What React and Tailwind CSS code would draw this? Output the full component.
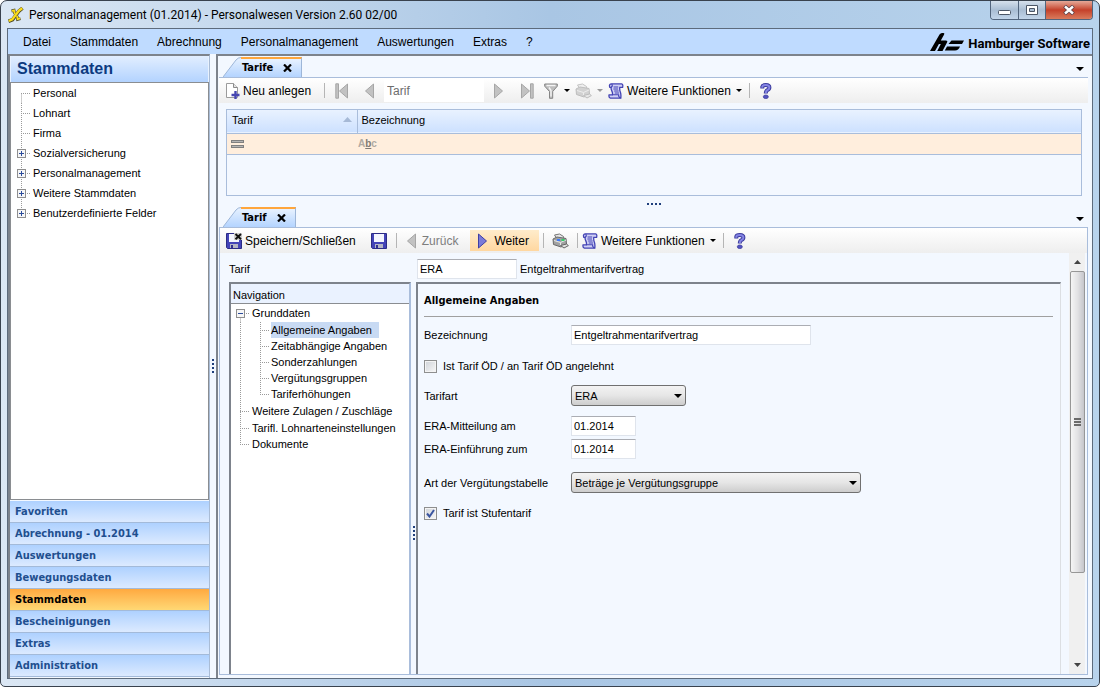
import { useState } from 'react';

const menuItems = ['Datei', 'Stammdaten', 'Abrechnung', 'Personalmanagement', 'Auswertungen', 'Extras', '?'];

const sidebarTree = [
  { label: 'Personal' },
  { label: 'Lohnart' },
  { label: 'Firma' },
  { label: 'Sozialversicherung', box: true },
  { label: 'Personalmanagement', box: true },
  { label: 'Weitere Stammdaten', box: true },
  { label: 'Benutzerdefinierte Felder', box: true },
];

const sidebarGroups = [
  'Favoriten', 'Abrechnung - 01.2014', 'Auswertungen', 'Bewegungsdaten',
  'Stammdaten', 'Bescheinigungen', 'Extras', 'Administration',
];

const navChildren = [
  'Allgemeine Angaben', 'Zeitabhängige Angaben', 'Sonderzahlungen',
  'Vergütungsgruppen', 'Tariferhöhungen',
];

const navRest = ['Weitere Zulagen / Zuschläge', 'Tarifl. Lohnarteneinstellungen', 'Dokumente'];

/* ---------- icons ---------- */

function AppIcon() {
  return (
    <svg width="16" height="16" viewBox="0 0 16 16" aria-hidden="true">
      <path d="M.5 14.2 L4.5 12.8 L11 4 L14.5 1.2" fill="none" stroke="#4d4a2c" strokeWidth="3.6" />
      <path d="M3.5 4 L6 3.4 L6.8 7 M9 9 L9.6 12.4 L12.5 11.6" fill="none" stroke="#4d4a2c" strokeWidth="3" />
      <path d="M.8 14 L4.3 12.4 L11 3.6 L14.3 1.2" fill="none" stroke="#fbdc1c" strokeWidth="2.4" />
      <path d="M3.8 4 L6 3.4 L6.8 7 M9 9 L9.6 12.2 L12.2 11.4" fill="none" stroke="#fbdc1c" strokeWidth="1.8" />
    </svg>
  );
}

function CompanyMark() {
  return (
    <svg width="34" height="18" viewBox="0 0 34 18" aria-hidden="true">
      <path d="M0 18 L9.5 1.5 Q10.5 0 12 0 H13.5 Q15 0 14 1.8 L10.8 7.5 H15.8 Q18 7.5 17 9.5 L12.5 18 H7.2 L10.8 11 H8.9 L5 18 Z" />
      <path d="M21.5 7.5 H34 L32 11 H18.5 Z M17 13.5 H30 Q28.5 17.5 25 17.5 H14.8 Z" />
    </svg>
  );
}

function Caret({ small = false, className = 'fill-black' }) {
  return small ? (
    <svg width="6" height="3" viewBox="0 0 6 3" className={`shrink-0 ${className}`} aria-hidden="true">
      <path d="M0 0 H6 L3 3 Z" />
    </svg>
  ) : (
    <svg width="8" height="4" viewBox="0 0 8 4" className={`shrink-0 ${className}`} aria-hidden="true">
      <path d="M0 0 H8 L4 4 Z" />
    </svg>
  );
}

function NewDocIcon() {
  return (
    <svg width="15" height="16" viewBox="0 0 15 16" aria-hidden="true">
      <path d="M.5 .5 H7.5 L11.5 4.5 V14.5 H.5 Z" fill="#fff" stroke="#9b9b9b" />
      <path d="M7.5 .5 V4.5 H11.5" fill="#e4e4e4" stroke="#8b8b8b" />
      <path d="M9.5 8 V16 M5.5 12 H13.5" stroke="#4646b0" strokeWidth="2.4" />
    </svg>
  );
}

function Arrow({ dir = 'right', bar = false, active = false }) {
  const fill = active ? '#7a7ad8' : '#c2c2c2';
  const stroke = active ? '#3f3fa4' : '#a6a6a6';
  const w = bar ? 13 : 10;
  return (
    <svg width={w} height="16" viewBox={`0 0 ${w} 16`} aria-hidden="true">
      <g transform={dir === 'left' ? `translate(${w} 0) scale(-1 1)` : undefined} fill={fill} stroke={stroke}>
        <path d="M.5 1 V15 L8.5 8 Z" />
        {bar && <path d="M9.5 .8 H12.2 V15.2 H9.5 Z" />}
      </g>
    </svg>
  );
}

function FunnelIcon() {
  return (
    <svg width="14" height="16" viewBox="0 0 14 16" aria-hidden="true">
      <path d="M.7 1 H13.3 V3.2 L8.7 8.5 V15.3 H5.5 V8.5 L.7 3.2 Z" fill="#bdbdbd" stroke="#858585" />
      <path d="M2.5 2.5 H11.5 M5 4.5 L7 7.5 V13.5" stroke="#f4f4f4" strokeWidth="1.4" fill="none" />
    </svg>
  );
}

function PrinterIcon({ disabled = false }) {
  return (
    <svg width="17" height="16" viewBox="0 0 17 16" aria-hidden="true" opacity={disabled ? 0.6 : 1}>
      <path d="M2.5 2 L7.5 1 L11.5 3.5 L12 7 L5 6 Z" fill="#e8e8e8" stroke={disabled ? '#a0a0a0' : '#777'} />
      <path d="M1 6 L5 4 L14 5.5 L14.5 11 L9 14 L1.5 11.5 Z" fill={disabled ? '#bbb' : '#a2a2a2'} stroke={disabled ? '#999' : '#6a6a6a'} />
      <path d="M2 7.5 L8.5 9.5 V13 M8.5 9.5 L14 7" stroke="#e8e8e8" fill="none" />
      <path d="M8.5 12.5 L14.5 11 L16.4 12.6 L12 15 Z" fill="#e0e0e0" stroke={disabled ? '#999' : '#666'} />
      {!disabled && <rect x="5" y="6" width="3" height="2" fill="#3d7bff" />}
      {!disabled && <rect x="9.5" y="6" width="3" height="2" fill="#35d06a" />}
    </svg>
  );
}

function ScrollIcon() {
  return (
    <svg width="16" height="16" viewBox="0 0 16 16" aria-hidden="true">
      <path d="M4 2 H12 L11.6 5 L12.6 11 V14 H4 L4.6 11 L3 5 Z" fill="#e9e9fc" />
      <path d="M3.2 .9 H13.6 Q15.3 1.2 14.6 4.3 H11.8 Q11.4 7 12.4 9.2 Q13.2 11.5 12.8 15.1 H2.4 Q.4 14.4 1.1 11.8 H4.4 Q4.9 10 3.7 7.6 Q2.8 6 3.2 4.3 H1.8 Q.7 1.6 3.2 .9 Z" fill="#cfcff5" stroke="#4343b4" strokeWidth="1.3" />
      <path d="M3.2 4.3 Q5 3.4 3.8 1 M4.4 11.8 H10.6 Q10.2 14 12.8 15" fill="none" stroke="#4343b4" strokeWidth="1.1" />
      <path d="M5.6 4 H10.2 M5.4 6 H10 M6.2 8 H10.6 M6.8 10 H11" stroke="#4343b4" />
    </svg>
  );
}

function HelpIcon() {
  return (
    <svg width="12" height="16" viewBox="0 0 12 16" aria-hidden="true">
      <path d="M2.3 5.4 V3.6 Q2.6 2 5.8 2 Q9.4 2 9.4 4.6 Q9.4 6.2 7.6 7 Q5.8 7.8 5.8 10.6" fill="none" stroke="#3c3c9e" strokeWidth="4" />
      <path d="M2.3 4.8 V3.6 Q2.6 2 5.8 2 Q9.4 2 9.4 4.6 Q9.4 6.2 7.6 7 Q5.8 7.8 5.8 10" fill="none" stroke="#8484e4" strokeWidth="2" />
      <ellipse cx="5.8" cy="13.8" rx="2.5" ry="1.8" fill="#5252c0" stroke="#3c3c9e" strokeWidth=".8" />
    </svg>
  );
}

function DiskIcon({ close = false }) {
  return (
    <svg width="16" height="16" viewBox="0 0 16 16" aria-hidden="true">
      <path d="M.5 .5 H15.5 V15.5 H1.5 L.5 14.5 Z" fill="#4444b8" stroke="#2c2c86" />
      <rect x="3" y="1" width="10" height="8" fill="#f4f6ff" />
      <rect x="4" y="11" width="8" height="4" fill="#b4b5c4" />
      <rect x="5" y="12" width="2" height="3" fill="#2f2f92" />
      {close && (
        <g>
          <rect x="8" y="0" width="8" height="7" fill="#cfcfcf" />
          <path d="M9.5 1 L15 6.2 M15 1 L9.5 6.2" stroke="#111" strokeWidth="1.9" />
        </g>
      )}
    </svg>
  );
}

function TabClose() {
  return (
    <svg width="9" height="8" viewBox="0 0 9 8" aria-hidden="true">
      <path d="M1 .5 L8 7.5 M8 .5 L1 7.5" stroke="#000" strokeWidth="2.2" />
    </svg>
  );
}

/* Dotted connector in front of a tree row */
function TreeLine({ h, w, x, first = false, last = false, box, horizontal = true }) {
  const mid = Math.floor(h / 2) + 0.5;
  return (
    <svg width={w} height={h} viewBox={`0 0 ${w} ${h}`} className="shrink-0" aria-hidden="true">
      <g stroke="#9a9a9a" strokeDasharray="1 1" fill="none">
        <path d={`M${x + 0.5} ${first ? mid : 0} V${last ? mid : h}`} />
        {horizontal && <path d={`M${x} ${mid} H${w - 2}`} />}
      </g>
      {box && (
        <g>
          <rect x={x - 3.5} y={mid - 4} width="8" height="8" fill="#f6f6f6" stroke="#8f8f8f" />
          <path d={`M${x - 2} ${mid} H${x + 3}`} stroke="#2b4c9b" />
          {box === 'plus' && <path d={`M${x + 0.5} ${mid - 2.5} V${mid + 2.5}`} stroke="#2b4c9b" />}
        </g>
      )}
    </svg>
  );
}

/* ---------- small parts ---------- */

function Tab({ label }) {
  return (
    <div className="flex h-[20px]">
      <svg width="18" height="20" viewBox="0 0 18 20" aria-hidden="true">
        <defs>
          <linearGradient id="tabFill" x1="0" y1="0" x2="0" y2="1">
            <stop offset="0" stopColor="#e8f2ff" />
            <stop offset="1" stopColor="#b4d4ff" />
          </linearGradient>
        </defs>
        <path d="M0 20 L13 3 Q15 .5 18 .5 V20 Z" fill="url(#tabFill)" />
        <path d="M0 20 L13 3 Q15 .5 18 .5" fill="none" stroke="#9db6d8" />
      </svg>
      <div className="flex items-center gap-[10px] border-t-2 border-r border-t-[#ffa63c] border-r-[#9db6d8] bg-linear-to-b from-[#e8f2ff] to-[#b4d4ff] pr-[9px] pl-px">
        <button type="button" className="font-['DejaVu_Sans_Condensed','DejaVu_Sans',sans-serif] text-[11px] font-bold">{label}</button>
        <button type="button" aria-label={`${label} schließen`}><TabClose /></button>
      </div>
    </div>
  );
}

function TabStrip({ label }) {
  return (
    <div className="flex h-[21px] shrink-0 items-end justify-between pr-[4px] pl-[4px]">
      <Tab label={label} />
      <button type="button" aria-label="Fenster" className="pb-[6px]"><Caret /></button>
    </div>
  );
}

function Separator() {
  return <span className="h-[15px] w-px bg-[#b5b5b5]" />;
}

function Dots({ vertical = false }) {
  return (
    <span className={`flex gap-[2px] ${vertical ? 'flex-col' : ''}`}>
      {[0, 1, 2, 3].map((i) => <i key={i} className="size-[2px] bg-[#1f3f7c]" />)}
    </span>
  );
}

function Select({ id, value, className }) {
  return (
    <span className={`relative inline-flex ${className}`}>
      <select id={id} defaultValue={value} className="h-[21px] w-full appearance-none rounded-[3px] border border-[#707070] bg-linear-to-b from-[#f3f3f3] via-[#e6e6e6] to-[#cdcdcd] px-[3px] text-[11px]">
        <option>{value}</option>
      </select>
      <svg width="8" height="4" viewBox="0 0 8 4" className="pointer-events-none absolute top-[9px] right-1" aria-hidden="true">
        <path d="M0 0 H8 L4 4 Z" />
      </svg>
    </span>
  );
}

function Checkbox({ id, label, checked, onChange }) {
  return (
    <div className="flex items-center">
      <span className="relative flex">
        <input id={id} type="checkbox" checked={checked} onChange={onChange} className="size-[13px] appearance-none border border-[#8e8f8f] bg-linear-to-br from-[#cfd3d8] to-[#f8f8f8] shadow-[inset_0_0_0_1px_#f4f4f4]" />
        {checked && (
          <svg width="9" height="9" viewBox="0 0 9 9" className="pointer-events-none absolute top-[2px] left-[2px]" aria-hidden="true">
            <path d="M1 4.5 L3.5 7.5 L8 1" fill="none" stroke="#3a55a0" strokeWidth="2" />
          </svg>
        )}
      </span>
      <label htmlFor={id} className="pl-[6px]">{label}</label>
    </div>
  );
}

const inputClass = 'h-[20px] border border-[#dfe4ec] border-t-[#abadb3] bg-white px-[2px] pb-px text-[11px] outline-none';

/* ---------- page sections ---------- */

function TitleBar() {
  return (
    <header className="flex h-[27px] shrink-0 items-start justify-between">
      <div className="flex items-center gap-[5px] pt-[6px] pl-px">
        <AppIcon />
        <h1 className="font-['Roboto',sans-serif] text-[12px] leading-4 whitespace-nowrap">
          Personalmanagement (01.2014) - Personalwesen Version 2.60 02/00
        </h1>
      </div>
      <div className="flex h-[19px] overflow-hidden rounded-b-[4px] border border-t-0 border-[#52657d]">
        <button type="button" aria-label="Minimieren" className="flex w-[28px] items-center justify-center border-r border-[#52657d] bg-linear-to-b from-[#d5e0ec] via-[#a9bdd3] to-[#c2d5ea]">
          <svg width="13" height="12" viewBox="0 0 13 12"><rect x=".5" y="6.5" width="12" height="4" rx="1" fill="#fff" stroke="#4c5666" /></svg>
        </button>
        <button type="button" aria-label="Maximieren" className="flex w-[27px] items-center justify-center border-r border-[#52657d] bg-linear-to-b from-[#d5e0ec] via-[#a9bdd3] to-[#c2d5ea]">
          <svg width="12" height="10" viewBox="0 0 12 10"><path fillRule="evenodd" d="M.5 .5 H11.5 V9.5 H.5 Z M3.5 3.5 V6.5 H8.5 V3.5 Z" fill="#fff" stroke="#4c5666" /></svg>
        </button>
        <button type="button" aria-label="Schließen" className="flex w-[46px] items-center justify-center bg-linear-to-b from-[#e5a898] via-[#c4402a] to-[#d97a5c]">
          <svg width="12" height="10" viewBox="0 0 12 10">
            <path d="M1.5 1 L10.5 9 M10.5 1 L1.5 9" stroke="#5b4048" strokeWidth="4" />
            <path d="M2 1.5 L10 8.5 M10 1.5 L2 8.5" stroke="#fff" strokeWidth="2.4" />
          </svg>
        </button>
      </div>
    </header>
  );
}

function MenuBar() {
  return (
    <nav className="flex h-[25px] shrink-0 items-center justify-between bg-[#bfdbff] pr-[2px] pl-[15px]">
      <ul className="flex gap-[19px] text-[12px]">
        {menuItems.map((item) => <li key={item}><button type="button">{item}</button></li>)}
      </ul>
      <div className="flex items-end gap-[4px]">
        <CompanyMark />
        <span className="font-['Roboto',sans-serif] text-[13px] leading-[14px] font-bold">Hamburger Software</span>
      </div>
    </nav>
  );
}

function Sidebar({ active, onSelect }) {
  return (
    <aside className="flex w-[202px] shrink-0 flex-col border-t-2 border-r border-l-2 border-[#7d838c] border-r-[#a9bcd6] pb-px">
      <h2 className="flex h-[26px] shrink-0 items-center border-x border-[#e8f2ff] bg-linear-to-b from-[#e2eeff] to-[#b3d3ff] pl-[6px] text-[16px] font-bold text-[#0c3a80]">
        Stammdaten
      </h2>
      <ul className="flex-1 border border-[#8a8d91] bg-white">
        {sidebarTree.map((node, i) => (
          <li key={node.label} className="flex h-[20px] items-center">
            <TreeLine h={20} w={22} x={10} first={i === 0} last={i === sidebarTree.length - 1} box={node.box && 'plus'} />
            <button type="button">{node.label}</button>
          </li>
        ))}
      </ul>
      <div className="mt-px font-['DejaVu_Sans_Condensed','DejaVu_Sans',sans-serif] text-[11px] font-bold">
        {sidebarGroups.map((group) => (
          <button
            key={group}
            type="button"
            onClick={() => onSelect(group)}
            className={`block h-[22px] w-full border-b border-[#a3bad9] bg-linear-to-b pl-[5px] text-left ${
              group === active ? 'from-[#ffa93f] to-[#ffd874] text-black' : 'from-[#aed1ff] to-[#dceaff] text-[#1f4f8f]'
            }`}
          >
            {group}
          </button>
        ))}
      </div>
    </aside>
  );
}

function ListPanel() {
  return (
    <section className="shrink-0">
      <TabStrip label="Tarife" />
      <div className="flex h-[26px] items-center border-t border-[#a9bddb] bg-linear-to-b from-white to-[#eeeeee] pl-[7px] text-[12px]">
        <button type="button" className="flex items-center gap-[2px]"><NewDocIcon />Neu anlegen</button>
        <div className="flex items-center gap-[10px] pl-[13px]">
          <Separator />
          <button type="button" aria-label="Erster"><Arrow dir="left" bar /></button>
          <button type="button" aria-label="Zurück" className="pl-[6px]"><Arrow dir="left" /></button>
          <input aria-label="Suche" defaultValue="Tarif" className="h-[23px] w-[100px] bg-white px-[3px] text-[12px] text-[#6d6d6d] outline-none" />
          <button type="button" aria-label="Vor"><Arrow /></button>
          <button type="button" aria-label="Letzter" className="pl-[7px]"><Arrow bar /></button>
        </div>
        <button type="button" aria-label="Filter" className="flex items-center gap-[6px] pl-[10px]"><FunnelIcon /><Caret small /></button>
        <button type="button" aria-label="Drucken" className="flex items-center gap-[5px] pl-[5px]"><PrinterIcon disabled /><Caret small className="fill-[#9a9a9a]" /></button>
        <button type="button" className="flex items-center gap-[3px] pr-[7px] pl-[5px]"><ScrollIcon />Weitere Funktionen<span className="pl-[2px]"><Caret small /></span></button>
        <Separator />
        <button type="button" aria-label="Hilfe" className="pl-[10px]"><HelpIcon /></button>
      </div>
      <div className="mt-[6px] mr-[6px] ml-[7px] h-[87px] border border-[#a9bddb]">
        <table className="w-full table-fixed border-collapse text-left text-[11px]">
          <thead>
            <tr className="h-[23px] border-b border-[#a9bddb] bg-linear-to-b from-[#e9f2ff] to-[#cde1ff]">
              <th className="w-[130px] border-r border-[#a9bddb] px-[5px] pb-[3px] font-normal">
                <span className="flex items-center justify-between">
                  Tarif
                  <svg width="9" height="5" viewBox="0 0 9 5" aria-hidden="true"><path d="M0 5 L4.5 0 L9 5 Z" fill="#a6b9d6" /></svg>
                </span>
              </th>
              <th className="px-[4px] pb-[3px] font-normal">Bezeichnung</th>
            </tr>
          </thead>
          <tbody>
            <tr className="h-[21px] border-b border-[#a9bddb] bg-[#ffeedd]">
              <td className="px-[4px]">
                <svg width="13" height="8" viewBox="0 0 13 8" aria-hidden="true">
                  <rect x=".5" y=".5" width="12" height="2" fill="#b5b5b5" stroke="#808080" />
                  <rect x=".5" y="5.5" width="12" height="2" fill="#b5b5b5" stroke="#808080" />
                </svg>
              </td>
              <td className="px-px text-[10px] font-bold text-[#b0aaa2]">A<span className="text-[#807a74] underline">b</span>c</td>
            </tr>
          </tbody>
        </table>
      </div>
    </section>
  );
}

function NavigationTree({ active, onSelect }) {
  return (
    <div className="flex w-[182px] shrink-0 flex-col border-2 border-b-0 border-[#7d838c] border-r-[#a9bddb] bg-white">
      <h3 className="h-[20px] shrink-0 border-b border-[#8a8d91] bg-[#eaf2ff] pl-[2px] leading-[22px]">Navigation</h3>
      <ul>
        <li>
          <div className="flex h-[18px] items-center">
            <TreeLine h={18} w={21} x={9} first box="minus" />
            <button type="button">Grunddaten</button>
          </div>
          <ul>
            {navChildren.map((item, i) => (
              <li key={item} className="flex h-[16px] items-center">
                <TreeLine h={16} w={21} x={9} horizontal={false} />
                <TreeLine h={16} w={19} x={8} last={i === navChildren.length - 1} />
                <button
                  type="button"
                  onClick={() => onSelect(item)}
                  className={`h-[16px] leading-[16px] whitespace-nowrap ${item === active ? 'bg-[#c8daf3] pr-[7px]' : ''}`}
                >
                  {item}
                </button>
              </li>
            ))}
          </ul>
        </li>
        {navRest.map((item, i) => (
          <li key={item} className={`flex items-center ${i === 0 ? 'h-[18px]' : 'h-[16px]'}`}>
            <TreeLine h={i === 0 ? 18 : 16} w={21} x={9} last={i === navRest.length - 1} />
            <button type="button" className="whitespace-nowrap">{item}</button>
          </li>
        ))}
      </ul>
    </div>
  );
}

function TarifForm() {
  const [oed, setOed] = useState(false);
  const [stufen, setStufen] = useState(true);

  return (
    <form className="min-w-0 flex-1 border-t-2 border-r border-l-2 border-[#7d838c] border-r-[#dcdfe3] pr-[7px] pl-[6px]">
      <h3 className="border-b border-[#a0a0a0] pt-[8px] pb-[7px] font-['DejaVu_Sans_Condensed','DejaVu_Sans',sans-serif] text-[11px] leading-[17px] font-bold">
        Allgemeine Angaben
      </h3>
      <div className="grid grid-cols-[147px_1fr] items-center pt-[8px]">
        <label htmlFor="bezeichnung">Bezeichnung</label>
        <input id="bezeichnung" defaultValue="Entgeltrahmentarifvertrag" className={`${inputClass} w-[240px]`} />
        <div className="col-span-2 pt-[13px] pb-[11px]">
          <Checkbox id="oed" label="Ist Tarif ÖD / an Tarif ÖD angelehnt" checked={oed} onChange={() => setOed(!oed)} />
        </div>
        <label htmlFor="tarifart">Tarifart</label>
        <Select id="tarifart" value="ERA" className="w-[115px]" />
        <label htmlFor="mitteilung" className="pt-[10px]">ERA-Mitteilung am</label>
        <input id="mitteilung" defaultValue="01.2014" className={`${inputClass} mt-[10px] w-[65px]`} />
        <label htmlFor="einfuehrung" className="pt-[3px]">ERA-Einführung zum</label>
        <input id="einfuehrung" defaultValue="01.2014" className={`${inputClass} mt-[3px] w-[65px]`} />
        <label htmlFor="tabelle" className="pt-[13px]">Art der Vergütungstabelle</label>
        <Select id="tabelle" value="Beträge je Vergütungsgruppe" className="mt-[13px] w-[290px]" />
        <div className="col-span-2 pt-[12px]">
          <Checkbox id="stufen" label="Tarif ist Stufentarif" checked={stufen} onChange={() => setStufen(!stufen)} />
        </div>
      </div>
    </form>
  );
}

function ScrollBar() {
  return (
    <div className="flex w-[16px] shrink-0 flex-col items-center bg-[#f0f0f0]">
      <svg width="7" height="4" viewBox="0 0 7 4" className="my-[7px] shrink-0" aria-hidden="true"><path d="M0 4 L3.5 0 L7 4 Z" fill="#444" /></svg>
      <div className="flex w-[15px] flex-[302] flex-col items-center justify-center gap-px rounded-[2px] border border-[#979797] bg-linear-to-r from-[#f5f5f5] via-[#e2e2e4] to-[#c6c6cb]">
        <i className="h-[2px] w-[7px] bg-[#6b6b6b]" />
        <i className="h-[2px] w-[7px] bg-[#6b6b6b]" />
        <i className="h-[2px] w-[7px] bg-[#6b6b6b]" />
      </div>
      <div className="flex-[83]" />
      <svg width="7" height="4" viewBox="0 0 7 4" className="my-[7px] shrink-0" aria-hidden="true"><path d="M0 0 H7 L3.5 4 Z" fill="#444" /></svg>
    </div>
  );
}

function DetailPanel() {
  const [page, setPage] = useState('Allgemeine Angaben');

  return (
    <section className="flex min-h-0 flex-1 flex-col">
      <TabStrip label="Tarif" />
      <div className="flex min-h-0 flex-1 flex-col border border-[#a9bddb]">
        <div className="flex h-[25px] shrink-0 items-center bg-linear-to-b from-white to-[#eeeeee] pl-[6px] text-[12px]">
          <button type="button" className="flex items-center gap-[3px]"><DiskIcon close />Speichern/Schließen</button>
          <button type="button" aria-label="Speichern" className="pr-[9px] pl-[15px]"><DiskIcon /></button>
          <Separator />
          <button type="button" className="flex items-center gap-[6px] px-[9px] pr-[12px] text-[#7d7d7d]"><Arrow dir="left" />Zurück</button>
          <button type="button" className="flex h-[21px] items-center gap-[6px] bg-linear-to-b from-[#ffeccb] to-[#ffd7a0] px-[8px] pr-[10px]"><Arrow active />Weiter</button>
          <span className="flex pl-[4px]"><Separator /></span>
          <button type="button" aria-label="Drucken" className="px-[8px]"><PrinterIcon /></button>
          <Separator />
          <button type="button" className="flex items-center gap-[3px] pr-[7px] pl-[4px]"><ScrollIcon />Weitere Funktionen<span className="pl-[2px]"><Caret small /></span></button>
          <Separator />
          <button type="button" aria-label="Hilfe" className="pl-[10px]"><HelpIcon /></button>
        </div>
        <div className="flex min-h-0 flex-1 pr-[2px]">
          <div className="flex min-w-0 flex-1 flex-col pr-[8px] pl-[9px]">
            <div className="flex shrink-0 items-center pt-[6px] pb-[3px]">
              <label htmlFor="tarif" className="w-[188px]">Tarif</label>
              <input id="tarif" defaultValue="ERA" className={`${inputClass} w-[100px]`} />
              <span className="pl-[3px]">Entgeltrahmentarifvertrag</span>
            </div>
            <div className="flex min-h-0 flex-1">
              <NavigationTree active={page} onSelect={setPage} />
              <div className="flex w-[5px] shrink-0 flex-col items-center justify-center pt-[110px]"><Dots vertical /></div>
              <TarifForm />
            </div>
          </div>
          <ScrollBar />
        </div>
      </div>
    </section>
  );
}

export default function App() {
  const [group, setGroup] = useState('Stammdaten');

  return (
    <div className="flex h-screen flex-col rounded-t-[7px] rounded-b-[5px] border border-[#39424e] bg-linear-to-r from-[#dbe7f4] via-[#a9c6e4] to-[#b8d3ec] px-[6px] pb-[7px] font-['Liberation_Sans',Arial,sans-serif] text-[11px] leading-[16px] text-black">
      <TitleBar />
      <div className="flex min-h-0 flex-1 flex-col border border-[#5d6b7c] bg-[#f3f8ff]">
        <MenuBar />
        <div className="flex min-h-0 flex-1">
          <Sidebar active={group} onSelect={setGroup} />
          <div className="flex w-[6px] shrink-0 items-center justify-center"><Dots vertical /></div>
          <main className="flex min-w-0 flex-1 flex-col border-t-2 border-l-2 border-[#7d838c] pr-[4px] pb-[3px] pl-px">
            <ListPanel />
            <div className="flex h-[10px] shrink-0 items-end justify-center pb-px"><Dots /></div>
            <DetailPanel />
          </main>
        </div>
      </div>
    </div>
  );
}
